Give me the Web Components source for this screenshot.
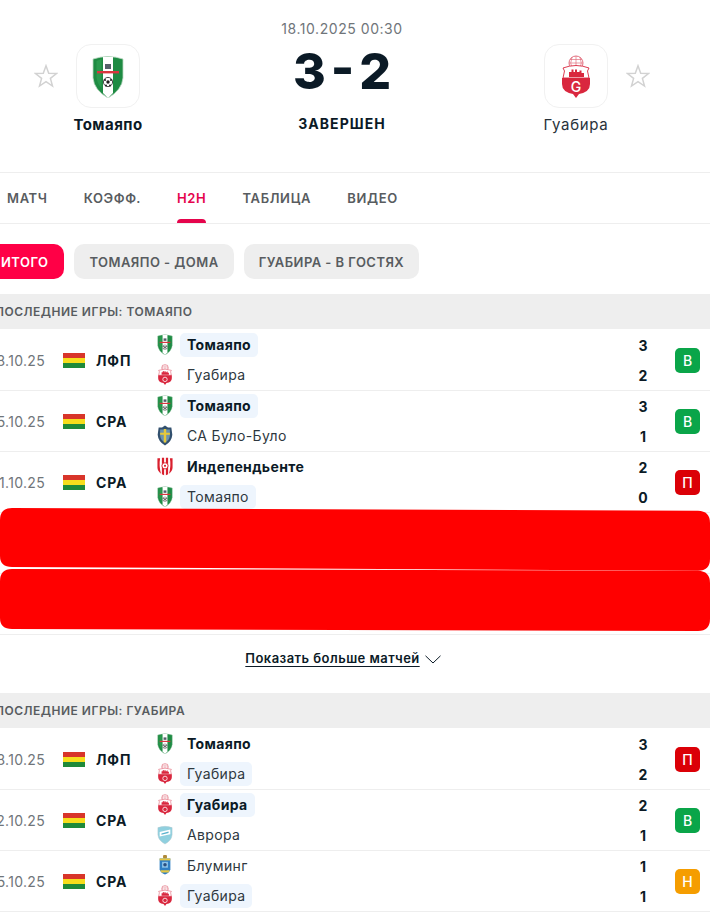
<!DOCTYPE html>
<html lang="ru">
<head>
<meta charset="utf-8">
<title>Томаяпо - Гуабира</title>
<style>
  html, body { margin: 0; height: 917px; overflow: hidden; background: #fff; }
  body { font-family: Inter, "Liberation Sans", sans-serif; color: #0b1a26; }
</style>
</head>
<body>
<x-page>
  <x-match-header date="18.10.2025 00:30" score="3 - 2" status="ЗАВЕРШЕН">
    <x-side slot="home" crest="tomayapo" strong>Томаяпо</x-side>
    <x-side slot="away" crest="guabira">Гуабира</x-side>
  </x-match-header>

  <x-tabs>
    <x-tab>МАТЧ</x-tab>
    <x-tab>КОЭФФ.</x-tab>
    <x-tab active>H2H</x-tab>
    <x-tab>ТАБЛИЦА</x-tab>
    <x-tab>ВИДЕО</x-tab>
  </x-tabs>

  <x-pills>
    <x-pill active>ИТОГО</x-pill>
    <x-pill>ТОМАЯПО - ДОМА</x-pill>
    <x-pill>ГУАБИРА - В ГОСТЯХ</x-pill>
  </x-pills>

  <x-section heading="ПОСЛЕДНИЕ ИГРЫ: ТОМАЯПО">
    <x-match-row date="18.10.25" league="ЛФП" result="В">
      <x-team crest="tomayapo" score="3" win mine>Томаяпо</x-team>
      <x-team crest="guabira" score="2">Гуабира</x-team>
    </x-match-row>
    <x-match-row date="15.10.25" league="СРА" result="В">
      <x-team crest="tomayapo" score="3" win mine>Томаяпо</x-team>
      <x-team crest="bulo" score="1">СА Було-Було</x-team>
    </x-match-row>
    <x-match-row date="11.10.25" league="СРА" result="П">
      <x-team crest="independiente" score="2" win>Индепендьенте</x-team>
      <x-team crest="tomayapo" score="0" mine>Томаяпо</x-team>
    </x-match-row>
    <x-hidden-row shape="a"></x-hidden-row>
    <x-hidden-row shape="b"></x-hidden-row>
  </x-section>

  <x-more>Показать больше матчей</x-more>

  <x-section heading="ПОСЛЕДНИЕ ИГРЫ: ГУАБИРА">
    <x-match-row date="18.10.25" league="ЛФП" result="П">
      <x-team crest="tomayapo" score="3" win>Томаяпо</x-team>
      <x-team crest="guabira" score="2" mine>Гуабира</x-team>
    </x-match-row>
    <x-match-row date="12.10.25" league="СРА" result="В">
      <x-team crest="guabira" score="2" win mine>Гуабира</x-team>
      <x-team crest="aurora" score="1">Аврора</x-team>
    </x-match-row>
    <x-match-row date="05.10.25" league="СРА" result="Н">
      <x-team crest="blooming" score="1">Блуминг</x-team>
      <x-team crest="guabira" score="1" mine>Гуабира</x-team>
    </x-match-row>
  </x-section>
</x-page>

<script>
// гербы клубов
const CRESTS = {
  tomayapo: (big) => `
    <svg viewBox="0 0 32 43" width="100%" height="100%">
      <path d="M1 4 Q16 -1 31 4 L31 23 Q30 35 16 43 Q2 35 1 23Z" fill="#1e8b43" stroke="#bcd9c4" stroke-width=".8"/>
      <path d="M11 2 H21 V38 L16 43 L11 38Z" fill="#fff"/>
      <path d="M4.5 6 L9.5 4 V33 Q6 30 4.5 23Z" fill="#2a9a4e"/>
      <rect x="5" y="16" width="22" height="2.4" fill="#d9363e"/>
      <rect x="13" y="9" width="6" height="5" fill="#56606a"/>
      <circle cx="16" cy="27" r="4.6" fill="#fff" stroke="#222" stroke-width=".8"/>
      <circle cx="16" cy="27" r="1.7" fill="#1c1c1c"/>
      <circle cx="13" cy="25" r="1" fill="#1c1c1c"/>
      <circle cx="19" cy="25" r="1" fill="#1c1c1c"/>
      <circle cx="14" cy="30.4" r="1" fill="#1c1c1c"/>
      <circle cx="18" cy="30.4" r="1" fill="#1c1c1c"/>
    </svg>`,
  guabira: (big) => `
    <svg viewBox="0 0 30 43" width="100%" height="100%">
      <circle cx="15" cy="8" r="7" fill="#fff" stroke="#e2707f" stroke-width="1"/>
      <path d="M8 8 H22 M9 4.5 H21 M15 1 V15 M11 2 Q8.5 8 11 14 M19 2 Q21.5 8 19 14" fill="none" stroke="#e2707f" stroke-width=".7"/>
      <path d="M2 13 Q15 8 28 13 L26.5 16 L28 23 H2 L3.5 16Z" fill="#fff" stroke="#d9273e" stroke-width=".9"/>
      <path d="M8 22 V17 H10.5 V14.5 H12.5 V17 H14 V14.5 H16 V17 H18.5 V15.5 H20.5 V18 H23 V22Z" fill="#d9273e"/>
      <path d="M1 23 H29 V29 Q29 37 18 39 L15 43 L12 39 Q1 37 1 29Z" fill="#d9273e"/>
      ${big
        ? '<text x="15" y="36.5" font-family="Inter, sans-serif" font-size="14" font-weight="500" fill="#fff" text-anchor="middle">G</text>'
        : '<circle cx="15" cy="31.5" r="4.5" fill="none" stroke="#fff" stroke-width="1.6"/>'}
    </svg>`,
  bulo: () => `
    <svg viewBox="0 0 32 43" width="100%" height="100%">
      <path d="M16 1 L22 5 L29 5 L31 20 Q30 34 16 42 Q2 34 1 20 L3 5 L10 5Z" fill="#32506e"/>
      <path d="M6 9 H26 V22 Q25 31 16 36 Q7 31 6 22Z" fill="#6c93b0"/>
      <path d="M13.5 8 H18.5 V16 H26 V20 H18.5 V36 H13.5 V20 H6 V16 H13.5Z" fill="#e6c93a"/>
    </svg>`,
  independiente: () => `
    <svg viewBox="0 0 36 43" width="100%" height="100%">
      <path d="M1 3 H35 V26 Q33 36 18 42 Q3 36 1 26Z" fill="#fff"/>
      <path d="M1 3 H7 Q4 20 9 38 Q1 32 1 24Z M35 3 H29 Q32 20 27 38 Q35 32 35 24Z" fill="#d9202e"/>
      <path d="M11 2 H16 V41 L11 39Z M20 2 H25 V39 L20 41Z" fill="#d9202e"/>
      <circle cx="18" cy="20" r="7" fill="#fff" stroke="#d9202e" stroke-width="2"/>
      <circle cx="18" cy="20" r="2.4" fill="#d9202e"/>
    </svg>`,
  aurora: () => `
    <svg viewBox="0 0 36 43" width="100%" height="100%">
      <path d="M2 6 Q18 0 34 6 L34 22 Q33 35 18 43 Q3 35 2 22Z" fill="#8fd0df" stroke="#b8c9cc" stroke-width="1"/>
      <path d="M6 16 L30 10 V21 L6 26Z" fill="#fff"/>
      <path d="M10 19 L26 15 V18 L10 22Z" fill="#5bb3ce"/>
    </svg>`,
  blooming: () => `
    <svg viewBox="0 0 30 43" width="100%" height="100%">
      <rect x="11" y="0" width="8" height="7" rx="2" fill="#b08a38"/>
      <path d="M4 7 H26 V29 Q25 36 15 40 Q5 36 4 29Z" fill="#2f7fc4"/>
      <path d="M4 7 H26 V11 H4Z" fill="#e7c842"/>
      <path d="M9 14 H21 V26 H9Z" fill="#8cc3e8"/>
      <circle cx="15" cy="20" r="3.6" fill="#2a4f80"/>
      <path d="M5 31 H25 L22 36 H8Z" fill="#e7c842"/>
    </svg>`
};

const STAR = `
  <svg viewBox="0 0 24 24" width="24" height="24" fill="none" stroke="#d2d2d2" stroke-width="1.5" stroke-linejoin="miter">
    <path d="M12 1.8 L14.7 9.2 L22.6 9.5 L16.4 14.4 L18.5 22 L12 17.6 L5.5 22 L7.6 14.4 L1.4 9.5 L9.3 9.2Z"/>
  </svg>`;

// шаблонный базовый класс, чтобы не повторять attachShadow
class ShadowEl extends HTMLElement {
  constructor() {
    super();
    this.attachShadow({ mode: "open" });
  }
  connectedCallback() {
    this.shadowRoot.innerHTML = this.markup();
  }
}

class XPage extends ShadowEl {
  markup() {
    return `<style>:host{display:block;width:726px;margin-left:-16px;background:#fff}</style><slot></slot>`;
  }
}

class XMatchHeader extends ShadowEl {
  markup() {
    return `
      <style>
        :host { display: grid; grid-template-columns: 1fr 200px 1fr; height: 172px; padding: 0 60px 0 50px;
                border-bottom: 1px solid #eeeeee; }
        .mid { display: flex; flex-direction: column; align-items: center; padding-top: 21px; }
        .date { font-size: 14px; line-height: 16px; color: #70757a; letter-spacing: .55px; }
        .score { font-size: 50px; line-height: 50px; height: 50px; margin-top: 9px; font-weight: 800; color: #0b1a26;
                 white-space: pre; word-spacing: -6px; }
        .status { font-size: 14px; line-height: 16px; margin-top: 20px; font-weight: 700; letter-spacing: 1.05px; color: #0b1a26; }
      </style>
      <slot name="home"></slot>
      <div class="mid">
        <div class="date">${this.getAttribute("date")}</div>
        <div class="score">${this.getAttribute("score")}</div>
        <div class="status">${this.getAttribute("status")}</div>
      </div>
      <slot name="away"></slot>`;
  }
}

class XSide extends ShadowEl {
  markup() {
    const away = this.slot === "away";
    const star = `<div class="star">${STAR}</div>`;
    const club = `
      <div class="club">
        <div class="logo"><div class="mark ${this.getAttribute("crest")}">${CRESTS[this.getAttribute("crest")](true)}</div></div>
        <div class="name ${this.hasAttribute("strong") ? "strong" : ""}"><slot></slot></div>
      </div>`;
    return `
      <style>
        :host { display: flex; align-items: flex-start; gap: 18px; padding-top: 44px; justify-content: ${away ? "flex-end" : "flex-start"}; }
        .star { width: 24px; height: 24px; margin-top: 20px; }
        .club { width: 64px; display: flex; flex-direction: column; align-items: center; }
        .logo { box-sizing: border-box; width: 64px; height: 64px; border: 1px solid #f1f1f1; border-radius: 15px;
                display: flex; align-items: center; justify-content: center; }
        .mark { width: 32px; height: 43px; }
        .name { margin-top: 7px; font-size: 15px; line-height: 20px; white-space: nowrap; letter-spacing: .7px; color: #28323a; }
        .strong { font-weight: 700; color: #0b1a26; letter-spacing: .45px; }
      </style>
      ${away ? club + star : star + club}`;
  }
}

class XTabs extends ShadowEl {
  markup() {
    return `
      <style>:host { display: flex; gap: 36px; height: 50px; padding-left: 23px; border-bottom: 1px solid #eeeeee; }</style>
      <slot></slot>`;
  }
}

class XTab extends ShadowEl {
  markup() {
    const on = this.hasAttribute("active");
    return `
      <style>
        :host { display: flex; align-items: center; position: relative; font-size: 13px; font-weight: 600;
                letter-spacing: .65px; color: ${on ? "#e5044c" : "#585c60"}; }
        .bar { position: absolute; left: 0; right: 0; bottom: 0; height: 4px; background: #e5044c; border-radius: 4px 4px 0 0; }
      </style>
      <slot></slot>${on ? '<div class="bar"></div>' : ""}`;
  }
}

class XPills extends ShadowEl {
  markup() {
    return `
      <style>:host { display: flex; gap: 10px; padding: 20px 0 15px 0; margin-left: 1px; }</style>
      <slot></slot>`;
  }
}

class XPill extends ShadowEl {
  markup() {
    const on = this.hasAttribute("active");
    return `
      <style>
        :host { display: flex; align-items: center; height: 35px; padding: 0 ${on ? 16 : 15}px; border-radius: 10px; font-size: 13px;
                font-weight: 600; letter-spacing: .45px; white-space: nowrap;
                background: ${on ? "#ff0046" : "#eeeeee"}; color: ${on ? "#fff" : "#585c60"}; }
      </style>
      <slot></slot>`;
  }
}

class XSection extends ShadowEl {
  markup() {
    return `
      <style>
        :host { display: block; }
        .head { height: 35px; display: flex; align-items: center; background: #eeeeee; padding-left: 11px;
                font-size: 12px; font-weight: 600; letter-spacing: .5px; color: #585c60; }
        .list { padding-top: 1px; position: relative; }
      </style>
      <div class="head">${this.getAttribute("heading")}</div>
      <div class="list"><slot></slot></div>`;
  }
}

class XMatchRow extends ShadowEl {
  markup() {
    const colors = { "В": "#0aa549", "П": "#db0007", "Н": "#f59d00" };
    const res = this.getAttribute("result");
    return `
      <style>
        :host { display: flex; align-items: center; height: 60px; border-bottom: 1px solid #eeeeee; font-size: 14px; }
        .date { width: 61px; text-align: right; color: #70757a; letter-spacing: .3px; }
        .flag { width: 22px; height: 15px; margin-left: 18px; flex: none;
                background: linear-gradient(#d8352a 0 33%, #f6de1d 33% 67%, #1f8a3a 67%); }
        .league { width: 61px; margin-left: 11px; font-weight: 700; letter-spacing: .85px; color: #0b1a26; }
        .teams { flex: 1; display: flex; flex-direction: column; }
        .badge { width: 25px; height: 25px; margin: 0 10px 0 22px; border-radius: 5px; display: flex; align-items: center;
                 justify-content: center; color: #fff; font-weight: 500; background: ${colors[res]}; }
      </style>
      <div class="date">${this.getAttribute("date")}</div>
      <div class="flag"></div>
      <div class="league">${this.getAttribute("league")}</div>
      <div class="teams"><slot></slot></div>
      <div class="badge">${res}</div>`;
  }
}

class XTeam extends ShadowEl {
  markup() {
    const win = this.hasAttribute("win");
    const mine = this.hasAttribute("mine");
    return `
      <style>
        :host { display: flex; align-items: center; height: 30px; }
        .crest { width: 16px; height: 21px; flex: none; margin-top: -2px; }
        .name { margin-left: 7px; padding: 0 7px; height: 24px; line-height: 23px; border-radius: 5px; white-space: nowrap;
                letter-spacing: .35px; font-weight: ${win ? 700 : 400}; color: ${win ? "#0b1a26" : "#2e3840"};
                background: ${mine ? "#eef5fd" : "transparent"}; }
        .score { margin-left: auto; width: 20px; text-align: center; font-weight: 700; color: #0b1a26; }
      </style>
      <div class="crest">${CRESTS[this.getAttribute("crest")](false)}</div>
      <div class="name"><slot></slot></div>
      <div class="score">${this.getAttribute("score")}</div>`;
  }
}

// строки, закрашенные красным поверх скриншота
class XHiddenRow extends ShadowEl {
  markup() {
    const shapes = {
      a: "M12 3 L698 5.7 Q710 6 710 18 L710 54 Q710 65.7 698 65.7 L12 62 Q0 62 0 51 L0 15 Q0 3 12 3Z",
      b: "M12 3 L698 4.7 Q710 5 710 17 L710 53 Q710 65 698 65 L12 63 Q0 63 0 52 L0 15 Q0 3 12 3Z"
    };
    return `
      <style>
        :host { display: block; position: relative; height: 60px; border-bottom: 1px solid #eeeeee; }
        svg { position: absolute; left: 16px; top: -8px; display: block; z-index: ${this.getAttribute("shape") === "a" ? 1 : 2}; }
      </style>
      <svg width="710" height="72" viewBox="0 0 710 72"><path d="${shapes[this.getAttribute("shape")]}" fill="#ff0000"/></svg>`;
  }
}

class XMore extends ShadowEl {
  markup() {
    return `
      <style>
        :host { box-sizing: border-box; display: flex; justify-content: center; align-items: center; gap: 5px; height: 58px;
                padding: 0 8px 12px 0; font-size: 13px; font-weight: 600; letter-spacing: .45px; color: #0b1a26; }
        .label { text-decoration: underline; text-underline-offset: 3px; }
        svg { display: block; margin-top: 2px; }
      </style>
      <span class="label"><slot></slot></span>
      <svg width="16" height="9" viewBox="0 0 16 9" fill="none" stroke="#0b1a26" stroke-width="1"><path d="M.5 .8 L8 8 L15.5 .8"/></svg>`;
  }
}

customElements.define("x-page", XPage);
customElements.define("x-match-header", XMatchHeader);
customElements.define("x-side", XSide);
customElements.define("x-tabs", XTabs);
customElements.define("x-tab", XTab);
customElements.define("x-pills", XPills);
customElements.define("x-pill", XPill);
customElements.define("x-section", XSection);
customElements.define("x-match-row", XMatchRow);
customElements.define("x-team", XTeam);
customElements.define("x-hidden-row", XHiddenRow);
customElements.define("x-more", XMore);
</script>
</body>
</html>
